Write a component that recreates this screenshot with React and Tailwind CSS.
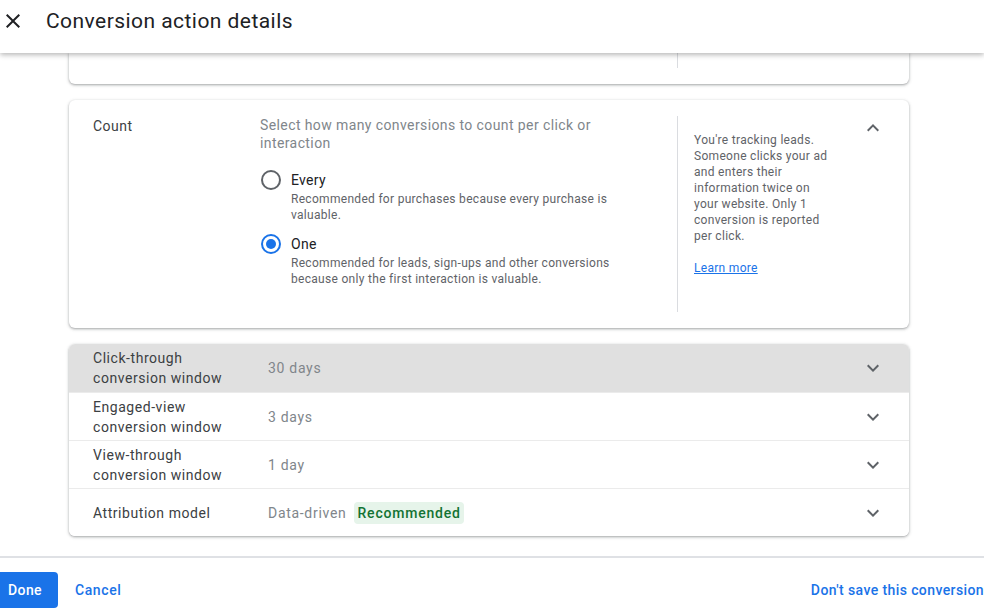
import React from "react";

const ChevronDown = () => (
  <svg width="24" height="24" viewBox="0 0 24 24" className="shrink-0">
    <path d="M16.59 8.59L12 13.17 7.41 8.59 6 10l6 6 6-6z" fill="#5f6368" />
  </svg>
);

const ChevronUp = () => (
  <svg width="24" height="24" viewBox="0 0 24 24" className="shrink-0">
    <path d="M12 8l-6 6 1.41 1.41L12 10.83l4.59 4.58L18 14z" fill="#5f6368" />
  </svg>
);

const CloseIcon = () => (
  <svg width="24" height="24" viewBox="0 0 24 24" className="shrink-0">
    <path
      d="M19 6.41L17.59 5 12 10.59 6.41 5 5 6.41 10.59 12 5 17.59 6.41 19 12 13.41 17.59 19 19 17.59 13.41 12z"
      fill="#202124"
    />
  </svg>
);

const cardShadow =
  "shadow-[0_1px_2px_rgba(60,64,67,0.3),0_1px_3px_1px_rgba(60,64,67,0.15)]";

function Row({ label, value, hovered, first, children }) {
  return (
    <div
      className={
        "flex h-12 items-center pl-6 pr-6 " +
        (hovered ? "bg-[#e0e0e0] " : "bg-white ") +
        (first ? "" : "border-t border-[#ebebeb]")
      }
    >
      <div className="w-[175px] shrink-0 text-[14px] leading-5 tracking-[0.55px] text-[#3c4043]">{label}</div>
      <div className="flex flex-1 items-center text-[14px] leading-5 tracking-[0.7px] text-[#80868b]">
        {value}
        {children}
      </div>
      <ChevronDown />
    </div>
  );
}

function Radio({ checked }) {
  if (checked) {
    return (
      <div className="ml-px flex h-5 w-5 shrink-0 items-center justify-center rounded-full border-2 border-[#1a73e8]">
        <div className="h-[10px] w-[10px] rounded-full bg-[#1a73e8]" />
      </div>
    );
  }
  return <div className="ml-px h-5 w-5 shrink-0 rounded-full border-2 border-[#5f6368]" />;
}

export default function App() {
  return (
    <div
      className="relative flex h-[609px] w-[984px] flex-col overflow-hidden bg-white"
      style={{ fontFamily: "Roboto, 'Noto Sans', Arial, sans-serif" }}
    >
      {/* Header */}
      <div className="relative z-10 h-[53px] shrink-0 bg-white shadow-[0_2px_5px_rgba(0,0,0,0.28)]">
        <div className="flex h-[42px] items-center">
          <div className="ml-px">
            <CloseIcon />
          </div>
          <div className="ml-[21px] text-[21px] leading-7 tracking-[0.45px] text-[#202124]">
            Conversion action details
          </div>
        </div>
      </div>

      {/* Content */}
      <div className="flex flex-1 flex-col overflow-hidden">
        <div className="ml-[69px] flex w-[840px] flex-col">
          {/* Remnant card */}
          <div className={"flex h-[31px] rounded-b-md bg-white " + cardShadow}>
            <div className="w-[608px]" />
            <div className="h-[15px] border-l border-[#dadce0]" />
          </div>

          {/* Count card */}
          <div className={"mt-4 flex h-[228px] rounded-md bg-white py-4 " + cardShadow}>
            <div className="w-[191px] shrink-0 pl-6 text-[14px] leading-5 tracking-[0.5px] text-[#3c4043]">
              Count
            </div>
            <div className="flex-1">
              <div className="w-[390px] text-[14px] leading-[18px] tracking-[0.4px] text-[#80868b]">
                Select how many conversions to count per click or interaction
              </div>
              <div className="mt-[18px] flex gap-[10px]">
                <Radio />
                <div>
                  <div className="text-[14px] leading-5 tracking-[0.3px] text-[#202124]">Every</div>
                  <div className="mt-px w-[335px] text-[12px] leading-4 tracking-[0.3px] text-[#5f6368]">
                    Recommended for purchases because every purchase is valuable.
                  </div>
                </div>
              </div>
              <div className="mt-[11px] flex gap-[10px]">
                <Radio checked />
                <div>
                  <div className="text-[14px] leading-5 tracking-[0.3px] text-[#202124]">One</div>
                  <div className="mt-px w-[335px] text-[12px] leading-4 tracking-[0.3px] text-[#5f6368]">
                    Recommended for leads, sign-ups and other conversions because only the first interaction is
                    valuable.
                  </div>
                </div>
              </div>
            </div>
            <div className="flex w-[232px] shrink-0 border-l border-[#dadce0] pl-4 pr-6">
              <div className="w-[138px] pt-4 text-[12px] leading-4 tracking-[0.3px] text-[#5f6368]">
                You're tracking leads. Someone clicks your ad and enters their information twice on your website.
                Only 1 conversion is reported per click.
                <div className="mt-4">
                  <span className="text-[#1a73e8] underline">Learn more</span>
                </div>
              </div>
              <div className="flex-1" />
              <ChevronUp />
            </div>
          </div>

          {/* Rows card */}
          <div className={"mt-4 flex flex-col overflow-hidden rounded-md bg-white " + cardShadow}>
            <Row label={<>Click-through<br />conversion window</>} value="30 days" hovered first />
            <Row label={<>Engaged-view<br />conversion window</>} value="3 days" />
            <Row label={<>View-through<br />conversion window</>} value="1 day" />
            <Row label="Attribution model" value="Data-driven">
              <span className="ml-2 rounded-sm bg-[#e6f4ea] px-[3px] py-px font-medium tracking-[0.8px] text-[#137333]">
                Recommended
              </span>
            </Row>
          </div>
        </div>
      </div>

      {/* Footer */}
      <div className="h-[53px] shrink-0 border-t-2 border-[#dfe1e5] bg-white pt-[14px]">
        <div className="flex items-center text-[14px] font-medium tracking-[0.4px]">
          <div className="ml-[-8px] flex h-9 items-center rounded bg-[#1a73e8] px-4 text-white">Done</div>
          <div className="ml-[17px] tracking-[0.6px] text-[#1a73e8]">Cancel</div>
          <div className="flex-1" />
          <div className="text-[#1a73e8]">Don't save this conversion</div>
        </div>
      </div>
    </div>
  );
}
